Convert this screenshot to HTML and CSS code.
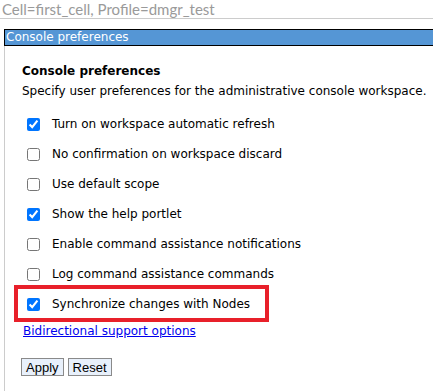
FILE: index.html
```html
<!DOCTYPE html>
<html>
<head>
<meta charset="utf-8">
<link rel="stylesheet" href="styles.css">
</head>
<body>
<div class="crumb">Cell=first_cell, Profile=dmgr_test</div>
<div class="titlebar">Console preferences</div>
<div class="panel">
  <h2 class="heading">Console preferences</h2>
  <p class="desc">Specify user preferences for the administrative console workspace.</p>
  <div class="options">
    <label class="row"><input type="checkbox" checked><span>Turn on workspace automatic refresh</span></label>
    <label class="row"><input type="checkbox"><span>No confirmation on workspace discard</span></label>
    <label class="row"><input type="checkbox"><span>Use default scope</span></label>
    <label class="row"><input type="checkbox" checked><span>Show the help portlet</span></label>
    <label class="row"><input type="checkbox"><span>Enable command assistance notifications</span></label>
    <label class="row"><input type="checkbox"><span>Log command assistance commands</span></label>
    <label class="row highlight"><input type="checkbox" checked><span>Synchronize changes with Nodes</span></label>
  </div>
  <a class="link" href="#">Bidirectional support options</a>
  <div class="buttons">
    <button class="btn">Apply</button>
    <button class="btn">Reset</button>
  </div>
</div>
</body>
</html>
```
FILE: styles.css
```css
html, body {
  margin: 0;
  padding: 0;
  background: #fff;
}
body {
  font-family: "DejaVu Sans", Verdana, sans-serif;
  color: #000;
  width: 433px;
  height: 391px;
  overflow: hidden;
  display: flex;
  flex-direction: column;
}
.crumb {
  height: 18px;
  line-height: 18px;
  padding-left: 2px;
  font-family: Lato, "DejaVu Sans", sans-serif;
  font-size: 15px;
  color: #9a9a9a;
  border-bottom: 1px solid #cccccc;
  white-space: nowrap;
}
.titlebar {
  margin-top: 10px;
  margin-left: 4px;
  height: 15px;
  line-height: 15px;
  border-top: 1px solid #000;
  border-bottom: 1px solid #000;
  border-left: 1px solid #000;
  background: #5596d5;
  color: #fff;
  font-size: 12px;
  padding-left: 1px;
  white-space: nowrap;
}
.panel {
  flex: 1;
  min-height: 0;
  margin-left: 4px;
  border-left: 1px solid #cccccc;
  padding-left: 17px;
  padding-top: 17px;
}
.heading {
  margin: 0;
  font-size: 12px;
  font-weight: bold;
  line-height: 16px;
}
.desc {
  margin: 4px 0 0 0;
  font-size: 12px;
  line-height: 16px;
  white-space: nowrap;
}
.options {
  display: flex;
  flex-direction: column;
  margin-top: 10px;
}
.row {
  position: relative;
  display: flex;
  align-items: center;
  height: 30px;
  font-size: 12px;
  white-space: nowrap;
}
.row input {
  margin: 0 12px 0 5px;
  width: 13px;
  height: 13px;
}
.highlight::after {
  content: "";
  position: absolute;
  left: -8px;
  top: -4px;
  width: 247px;
  height: 29px;
  border: 4px solid #e8202a;
}
.link {
  display: inline-block;
  margin-top: 4px;
  margin-left: 1px;
  font-size: 12px;
  line-height: 16px;
  color: #0000ee;
  text-decoration: underline;
}
.buttons {
  display: flex;
  gap: 4px;
  margin-top: 19px;
  margin-left: -1px;
}
.btn {
  font-family: "Liberation Sans", Arial, sans-serif;
  font-size: 13px;
  height: 18px;
  padding: 0 4px;
  background: #e8f0fb;
  border: 1px solid #8a8a8a;
  border-radius: 0;
  color: #000;
}
```
